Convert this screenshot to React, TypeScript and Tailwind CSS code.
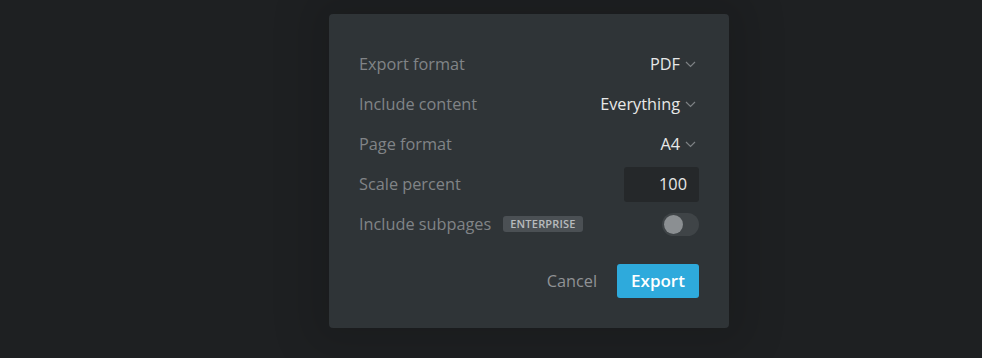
import React from "react";

function Chevron() {
  return (
    <svg width="11" height="7" viewBox="0 0 11 7" className="ml-[5px] mr-[3px] mt-[1px]">
      <path d="M1 1l4.5 4.5L10 1" fill="none" stroke="#7d8184" strokeWidth="1.2" />
    </svg>
  );
}

function Row({ label, children }: { label: React.ReactNode; children: React.ReactNode }) {
  return (
    <div className="flex h-10 items-center justify-between">
      <div className="flex items-center text-[#818487]">{label}</div>
      <div className="flex items-center text-[#e8e8e8]">{children}</div>
    </div>
  );
}

export default function App() {
  return (
    <div
      className="flex h-[358px] w-[982px] bg-[#1e2022] pl-[329px] pt-[14px]"
      style={{ fontFamily: '"Open Sans", "Noto Sans", sans-serif' }}
    >
      <div className="flex h-[314px] w-[400px] flex-col rounded-[4px] bg-[#2f3437] px-[30px] pt-[30px] text-[16.3px] shadow-[0_0_40px_20px_rgba(0,0,0,0.12)]">
        <Row label="Export format">
          PDF
          <Chevron />
        </Row>
        <Row label="Include content">
          Everything
          <Chevron />
        </Row>
        <Row label="Page format">
          A4
          <Chevron />
        </Row>
        <Row label="Scale percent">
          <div className="flex h-[35px] w-[75px] items-center justify-end rounded-[3px] bg-[#25282a] pr-[12px]">100</div>
        </Row>
        <Row
          label={
            <>
              Include subpages
              <span className="ml-[12px] rounded-[3px] bg-[#4b5054] px-[7px] text-[11px] font-semibold leading-[16px] tracking-[0.2px] text-[#b8bbbe]">
                ENTERPRISE
              </span>
            </>
          }
        >
          <div className="flex h-[23px] w-[37px] items-center rounded-full bg-[#3f4447] px-[2px]">
            <div className="h-[19px] w-[19px] rounded-full bg-[#8b8f92]" />
          </div>
        </Row>
        <div className="mt-[20px] flex items-center justify-end">
          <span className="mr-[20px] text-[#8f9295]">Cancel</span>
          <div className="flex h-[34px] w-[82px] items-center justify-center rounded-[3px] bg-[#2eaadc] text-[17px] font-semibold text-white">
            Export
          </div>
        </div>
      </div>
    </div>
  );
}
